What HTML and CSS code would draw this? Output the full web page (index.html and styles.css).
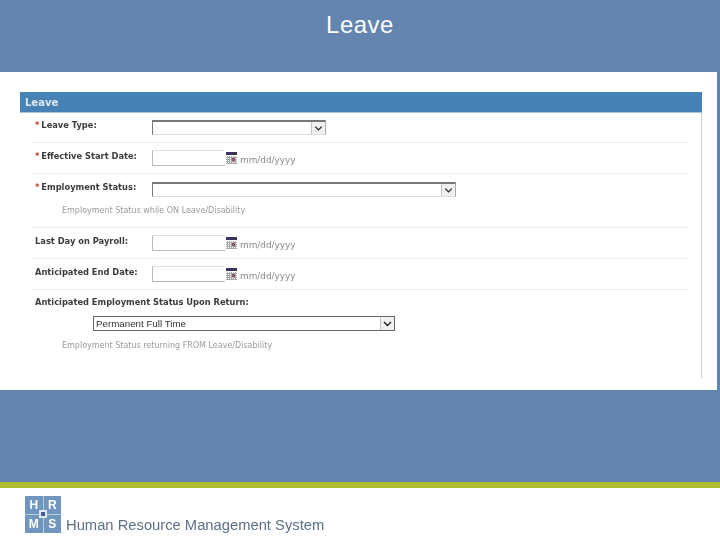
FILE: index.html
```html
<!DOCTYPE html>
<html lang="en">
<head>
<meta charset="utf-8">
<title>Leave</title>
<link rel="stylesheet" href="styles.css">
</head>
<body>
<header class="title-band"><h1 class="title">Leave</h1></header>
<main class="sheet">
  <section class="panel">
    <h2 class="panel-head">Leave</h2>
    <div class="panel-body">
      <div class="row row-first">
        <span class="label"><b class="req">*</b>Leave Type:</span>
        <div class="select select-type"><svg class="chev" viewBox="0 0 13 13"><path d="M3 5l3.500 3.500L10 5" /></svg></div>
      </div>
      <div class="row">
        <span class="label"><b class="req">*</b>Effective Start Date:</span>
        <div class="date"></div>
        <svg class="cal" viewBox="0 0 11 12"><rect class="cal-top" width="11" height="3"/><path class="cal-grid" d="M0 5.500H11M0 7.500H11M0 9.500H11M0 11.500H11M1.500 4V12M3.500 4V12M5.500 4V12M7.500 4V12M9.500 4V12"/><rect class="cal-dot" x="6" y="6" width="3" height="3"/></svg>
        <span class="hint">mm/dd/yyyy</span>
      </div>
      <div class="row row-note">
        <div class="row-line">
          <span class="label"><b class="req">*</b>Employment Status:</span>
          <div class="select select-status"><svg class="chev" viewBox="0 0 13 13"><path d="M3 5l3.500 3.500L10 5" /></svg></div>
        </div>
        <p class="note">Employment Status while ON Leave/Disability</p>
      </div>
      <div class="row">
        <span class="label label-plain">Last Day on Payroll:</span>
        <div class="date"></div>
        <svg class="cal" viewBox="0 0 11 12"><rect class="cal-top" width="11" height="3"/><path class="cal-grid" d="M0 5.500H11M0 7.500H11M0 9.500H11M0 11.500H11M1.500 4V12M3.500 4V12M5.500 4V12M7.500 4V12M9.500 4V12"/><rect class="cal-dot" x="6" y="6" width="3" height="3"/></svg>
        <span class="hint">mm/dd/yyyy</span>
      </div>
      <div class="row">
        <span class="label label-plain">Anticipated End Date:</span>
        <div class="date"></div>
        <svg class="cal" viewBox="0 0 11 12"><rect class="cal-top" width="11" height="3"/><path class="cal-grid" d="M0 5.500H11M0 7.500H11M0 9.500H11M0 11.500H11M1.500 4V12M3.500 4V12M5.500 4V12M7.500 4V12M9.500 4V12"/><rect class="cal-dot" x="6" y="6" width="3" height="3"/></svg>
        <span class="hint">mm/dd/yyyy</span>
      </div>
      <div class="row-last">
        <span class="label label-plain label-wide">Anticipated Employment Status Upon Return:</span>
        <div class="select select-return"><span class="select-value">Permanent Full Time</span><svg class="chev" viewBox="0 0 13 13"><path d="M3 5l3.500 3.500L10 5" /></svg></div>
        <p class="note note-return">Employment Status returning FROM Leave/Disability</p>
      </div>
    </div>
  </section>
</main>
<div class="mid-band"></div>
<div class="green-rule"></div>
<footer class="footer">
  <div class="logo">
    <span class="tile">H</span><span class="tile">R</span><span class="tile">M</span><span class="tile">S</span>
    <i class="logo-dot"></i>
  </div>
  <span class="brand">Human Resource Management System</span>
</footer>
</body>
</html>
```
FILE: styles.css
```css
* { box-sizing: border-box; }
html, body { margin: 0; padding: 0; }
body {
  width: 720px;
  height: 540px;
  overflow: hidden;
  background: #fff;
  display: flex;
  flex-direction: column;
  font-family: "Liberation Sans", Arial, sans-serif;
}
.title-band {
  height: 72px;
  flex: none;
  background: #6485af;
  display: flex;
  justify-content: center;
}
.title {
  margin: 11px 0 0;
  color: #fff;
  font-size: 24px;
  line-height: 27px;
  font-weight: 400;
  letter-spacing: .5px;
}
.sheet {
  height: 318px;
  flex: none;
  background: #fff;
  padding: 20px 0 0 20px;
  border-right: 3px solid #6485af;
  overflow: hidden;
}
.panel { width: 682px; height: 286px; }
.panel-head {
  margin: 0;
  height: 21px;
  padding-left: 5px;
  background: #4682b4;
  border-bottom: 1px solid #a9c4dc;
  color: #dfe9f3;
  font: 700 10px/21px "DejaVu Sans", sans-serif;
  filter: blur(.4px);
}
.panel-body {
  height: 265px;
  padding: 0 13px 0 12px;
  border-right: 1px solid #c9c9c9;
  font: 700 8.300px/12px "DejaVu Sans", sans-serif;
  color: #3c3c3c;
}
.row {
  height: 31px;
  display: flex;
  align-items: flex-start;
  padding-top: 7px;
  border-bottom: 1px solid #ececec;
}
.row-first { height: 30px; }
.row-first .label { margin-top: -1px; }
.row-note { height: 54px; display: block; }
.row-line { display: flex; align-items: flex-start; }
.label {
  flex: none;
  width: 120px;
  padding-left: 3px;
  white-space: nowrap;
  filter: blur(.35px);
}
.label-wide { display: block; width: auto; margin-top: 6px; }
.req { color: #c0392b; margin-right: 2px; }
.select {
  flex: none;
  height: 15px;
  background: #fff;
  display: flex;
  justify-content: flex-end;
  align-items: stretch;
  border-top: 2px solid #777;
  border-left: 1px solid #777;
  border-bottom: 1px solid #ddd;
  border-right: 1px solid #aaa;
}
.select-type { width: 174px; }
.select-status { width: 304px; margin-top: 1px; }
.select-return {
  width: 302px;
  margin: 8px 0 0 61px;
  border: 1px solid #666;
  justify-content: space-between;
}
.select-value {
  padding-left: 2px;
  font: 400 9.750px/13px "Liberation Sans", sans-serif;
  color: #333;
  filter: blur(.3px);
}
.chev {
  width: 14px;
  height: 100%;
  background: #f1f1f1;
  border-left: 1px solid #c4c4c4;
}
.chev path { fill: none; stroke: #222; stroke-width: 1.400; }
.date {
  flex: none;
  width: 73px;
  height: 16px;
  border-left: 1px solid #bbb;
  border-bottom: 1px solid #bbb;
  border-top: 1px solid #e2e2e2;
}
.cal { flex: none; width: 11px; height: 12px; margin: 2px 0 0 1px; }
.cal-top { fill: #35355f; }
.cal-grid { fill: none; stroke: #a8a8a8; stroke-width: 1; }
.cal-dot { fill: #8a5a66; }
.hint {
  margin: 4px 0 0 3px;
  font: 400 8.900px/12px "DejaVu Sans", sans-serif;
  color: #8a8a8a;
  filter: blur(.35px);
}
.note {
  margin: 8px 0 0 30px;
  font: 400 8px/12px "DejaVu Sans", sans-serif;
  color: #9b9b9b;
  filter: blur(.45px);
}
.note-return { margin-top: 9px; }
.mid-band { height: 92px; flex: none; background: #6485af; }
.green-rule { height: 6px; flex: none; background: #aebd2b; }
.footer {
  flex: 1;
  padding: 8px 0 0 25px;
  display: flex;
  align-items: flex-end;
}
.logo {
  position: relative;
  flex: none;
  width: 36px;
  height: 36px;
  margin-bottom: 8px;
  display: grid;
  grid-template-columns: 1fr 1fr;
  gap: 1px;
  background: #b9cbdf;
}
.tile {
  background: #7196bd;
  color: #fff;
  text-align: center;
  font: 700 12px/18px "Liberation Sans", sans-serif;
  filter: blur(.3px);
}
.logo-dot {
  position: absolute;
  left: 14px;
  top: 14px;
  width: 8px;
  height: 8px;
  background: #3f5f88;
  border: 2px solid #dfe7f0;
}
.brand {
  margin: 0 0 6px 5px;
  font-size: 14.750px;
  line-height: 18px;
  color: #5c7086;
  filter: blur(.3px);
}
```
